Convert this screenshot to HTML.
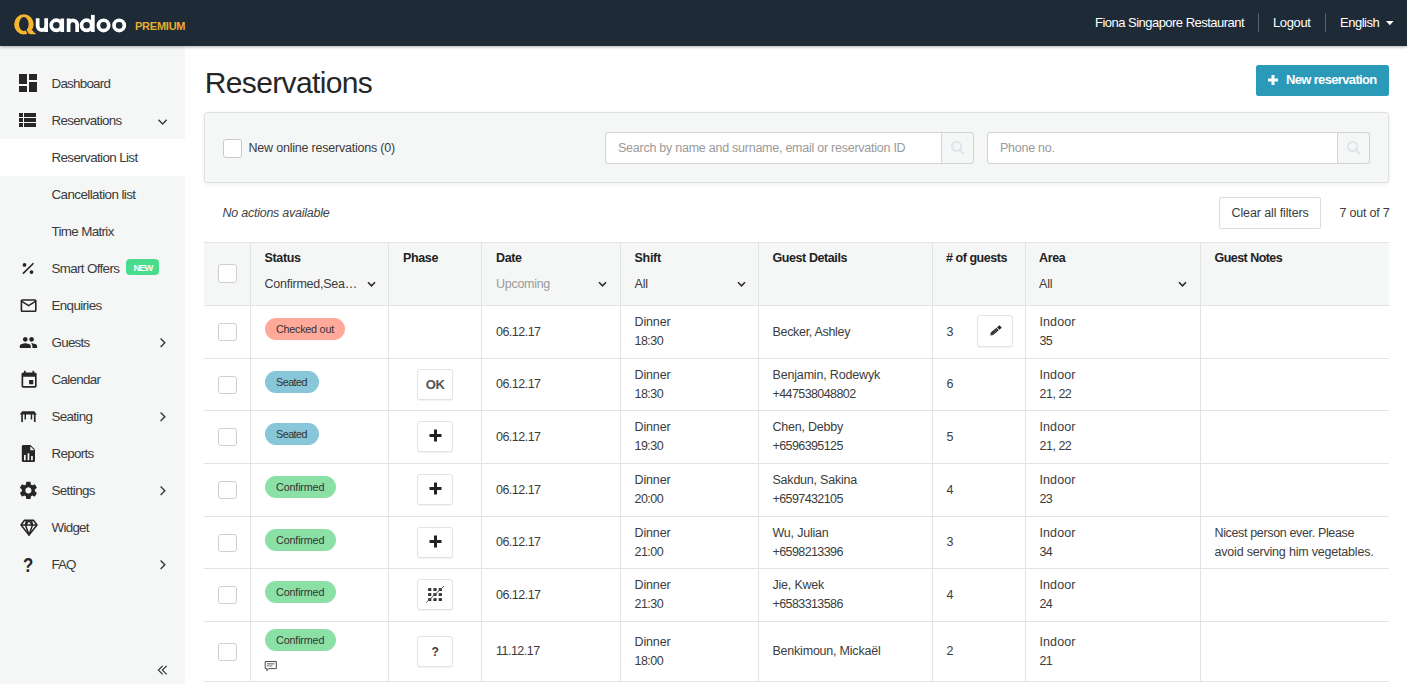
<!DOCTYPE html>
<html><head><meta charset="utf-8"><title>Reservations</title>
<style>
html,body{margin:0;padding:0;}
body{width:1407px;height:684px;overflow:hidden;position:relative;background:#fff;font-family:"Liberation Sans",sans-serif;}
.t{position:absolute;white-space:nowrap;}
.b{position:absolute;display:block;}
</style></head><body>
<div class="b" style="left:0px;top:0px;width:1407px;height:46px;background:#1e2a35;box-shadow:0 1px 3px rgba(0,0,0,.32);z-index:5"></div>
<svg class="b" style="left:0px;top:0px;z-index:6" width="130" height="46" viewBox="0 0 130 46"><path fill="#f8b52f" fill-rule="evenodd" d="M14.1 24.35A9.8 10.05 0 1 0 33.7 24.35A9.8 10.05 0 1 0 14.1 24.35ZM19 24.05A4.85 6.95 0 1 0 28.7 24.05A4.85 6.95 0 1 0 19 24.05Z"/><path fill="#f8b52f" d="M27 29.2L32.6 30.4Q34.3 32.9 36.5 34Q32.4 34.7 28.8 33.8Z"/><path d="M25.7 29.1L28.3 34.6" stroke="#1e2a35" stroke-width="1.1"/><g fill="none" stroke="#fff" stroke-width="3.7"><path d="M37.65 18.3V25.9A4.25 4.25 0 0 0 46.15 25.9V18.3M46.15 25.5V31.9"/><circle cx="56.3" cy="25.3" r="5.1"/><path d="M62.25 18.5V32"/><path d="M68.6 32V24.6A4.275 4.275 0 0 1 77.15 24.6V32M68.6 25V18.6"/><circle cx="86.6" cy="25.3" r="5.1"/><path d="M92.85 14.9V32"/><circle cx="103.55" cy="25.4" r="5.15"/><circle cx="119.15" cy="25.4" r="5.15"/></g></svg>
<div class="t" style="left:135.00px;top:16.13px;font-size:11px;line-height:20px;color:#e8ad2f;font-weight:bold;letter-spacing:-0.235px;z-index:6">PREMIUM</div>
<div class="t" style="left:1095.00px;top:12.65px;font-size:13px;line-height:20px;color:#fff;letter-spacing:-0.523px;z-index:6">Fiona Singapore Restaurant</div>
<div class="b" style="left:1258px;top:13px;width:1px;height:19px;background:#56606a;z-index:6"></div>
<div class="t" style="left:1273.00px;top:12.65px;font-size:13px;line-height:20px;color:#fff;letter-spacing:-0.377px;z-index:6">Logout</div>
<div class="b" style="left:1325px;top:13px;width:1px;height:19px;background:#56606a;z-index:6"></div>
<div class="t" style="left:1340.00px;top:12.65px;font-size:13px;line-height:20px;color:#fff;letter-spacing:-0.491px;z-index:6">English</div>
<svg class="b" style="left:1386px;top:21.3px;z-index:6" width="8" height="5" viewBox="0 0 8 5"><path d="M0 0H7.6L3.8 4.3Z" fill="#fff"/></svg>
<div class="b" style="left:0px;top:46px;width:185px;height:638px;background:#f5f6f6"></div>
<div class="b" style="left:0px;top:139px;width:185px;height:37px;background:#fff"></div>
<div class="t" style="left:51.50px;top:73.65px;font-size:13.4px;line-height:20px;color:#3a3a3a;letter-spacing:-0.761px;">Dashboard</div>
<div class="t" style="left:51.50px;top:110.65px;font-size:13.4px;line-height:20px;color:#3a3a3a;letter-spacing:-0.681px;">Reservations</div>
<div class="t" style="left:51.50px;top:147.65px;font-size:13.4px;line-height:20px;color:#3a3a3a;letter-spacing:-0.627px;">Reservation List</div>
<div class="t" style="left:51.50px;top:184.65px;font-size:13.4px;line-height:20px;color:#3a3a3a;letter-spacing:-0.577px;">Cancellation list</div>
<div class="t" style="left:51.50px;top:221.65px;font-size:13.4px;line-height:20px;color:#3a3a3a;letter-spacing:-0.660px;">Time Matrix</div>
<div class="t" style="left:51.50px;top:258.65px;font-size:13.4px;line-height:20px;color:#3a3a3a;letter-spacing:-0.659px;">Smart Offers</div>
<div class="t" style="left:51.50px;top:295.65px;font-size:13.4px;line-height:20px;color:#3a3a3a;letter-spacing:-0.649px;">Enquiries</div>
<div class="t" style="left:51.50px;top:332.65px;font-size:13.4px;line-height:20px;color:#3a3a3a;letter-spacing:-0.739px;">Guests</div>
<div class="t" style="left:51.50px;top:369.65px;font-size:13.4px;line-height:20px;color:#3a3a3a;letter-spacing:-0.710px;">Calendar</div>
<div class="t" style="left:51.50px;top:406.65px;font-size:13.4px;line-height:20px;color:#3a3a3a;letter-spacing:-0.678px;">Seating</div>
<div class="t" style="left:51.50px;top:443.65px;font-size:13.4px;line-height:20px;color:#3a3a3a;letter-spacing:-0.700px;">Reports</div>
<div class="t" style="left:51.50px;top:480.65px;font-size:13.4px;line-height:20px;color:#3a3a3a;letter-spacing:-0.632px;">Settings</div>
<div class="t" style="left:51.50px;top:517.65px;font-size:13.4px;line-height:20px;color:#3a3a3a;letter-spacing:-0.726px;">Widget</div>
<div class="t" style="left:51.50px;top:554.65px;font-size:13.4px;line-height:20px;color:#3a3a3a;letter-spacing:-0.934px;">FAQ</div>
<div class="b" style="left:126px;top:259px;width:32.5px;height:16px;background:#48dc8c;border-radius:4px"></div>
<div class="t" style="left:133.60px;top:257.71px;font-size:9.3px;line-height:20px;color:#fff;font-weight:bold;letter-spacing:-1.032px;">NEW</div>
<svg class="b" style="left:16.4px;top:71.4px;" width="24" height="24" viewBox="0 0 24 24"><path fill="#262626" d="M3 13h8V3H3v10zm0 8h8v-6H3v6zm10 0h8V11h-8v10zm0-18v6h8V3h-8z"/></svg>
<svg class="b" style="left:15.4px;top:107.9px;" width="24" height="24" viewBox="0 0 24 24"><path fill="#262626" d="M4 14h4v-4H4v4zm0 5h4v-4H4v4zM4 9h4V5H4v4zm5 5h12v-4H9v4zm0 5h12v-4H9v4zM9 5v4h12V5H9z"/></svg>
<svg class="b" style="left:20px;top:260px;" width="16" height="16" viewBox="0 0 16 16"><circle cx="4.5" cy="4.9" r="1.9" fill="#262626"/><circle cx="11.5" cy="12.1" r="1.9" fill="#262626"/><path d="M3 13.6L13.5 3.3" stroke="#262626" stroke-width="1.6"/></svg>
<svg class="b" style="left:18.5px;top:295.7px;" width="19.2" height="19.2" viewBox="0 0 24 24"><path fill="#262626" d="M20 4H4c-1.1 0-1.99.9-1.99 2L2 18c0 1.1.9 2 2 2h16c1.1 0 2-.9 2-2V6c0-1.1-.9-2-2-2zm0 14H4V8l8 5 8-5v10zm-8-7L4 6h16l-8 5z"/></svg>
<svg class="b" style="left:18.7px;top:333.3px;" width="18.9" height="18.9" viewBox="0 0 24 24"><path fill="#262626" d="M16 11c1.66 0 2.99-1.34 2.99-3S17.66 5 16 5c-1.66 0-3 1.34-3 3s1.34 3 3 3zm-8 0c1.66 0 2.99-1.34 2.99-3S9.66 5 8 5C6.340 5 5 6.34 5 8s1.34 3 3 3zm0 2c-2.33 0-7 1.17-7 3.5V19h14v-2.5c0-2.33-4.67-3.5-7-3.5zm8 0c-.29 0-.62.02-.97.05 1.16.84 1.970 1.97 1.97 3.45V19h6v-2.5c0-2.33-4.67-3.5-7-3.5z"/></svg>
<svg class="b" style="left:18.5px;top:370.2px;" width="20.2" height="20.2" viewBox="0 0 24 24"><path fill="#262626" d="M17 12h-5v5h5v-5zM16 1v2H8V1H6v2H5c-1.11 0-1.99.9-1.99 2L3 19c0 1.1.89 2 2 2h14c1.1 0 2-.9 2-2V5c0-1.1-.9-2-2-2h-1V1h-2zm3 18H5V8h14v11z"/></svg>
<svg class="b" style="left:19px;top:410px;" width="19" height="13" viewBox="0 0 19 13"><path fill="#262626" d="M3.2 1.2H15.3L17.8 4.6H0.7Z"/><rect x="2.2" y="4" width="1.7" height="8" fill="#262626"/><rect x="5.5" y="4" width="1.5" height="5.5" fill="#262626"/><rect x="11.7" y="4" width="1.5" height="5.5" fill="#262626"/><rect x="14.9" y="4" width="1.7" height="8" fill="#262626"/></svg>
<svg class="b" style="left:21px;top:444px;" width="15" height="19" viewBox="0 0 15 19"><path fill="#262626" d="M2.2 1H9.5L14 5.6V16.5Q14 18 12.5 18H2.2Q0.8 18 0.8 16.5V2.5Q0.8 1 2.2 1Z"/><path fill="#f5f6f6" d="M9.3 2.2V6.2H13.3Z"/><rect x="3" y="11" width="1.7" height="5.3" fill="#f5f6f6"/><rect x="6.6" y="9.3" width="1.7" height="7" fill="#f5f6f6"/><rect x="10.1" y="12" width="1.7" height="4.3" fill="#f5f6f6"/></svg>
<svg class="b" style="left:17.75px;top:480.3px;" width="20.8" height="20.8" viewBox="0 0 24 24"><path fill="#262626" d="M19.43 12.98c.04-.32.07-.64.07-.98s-.03-.66-.07-.98l2.11-1.65c.19-.15.24-.42.12-.64l-2-3.46c-.12-.22-.39-.3-.61-.22l-2.49 1c-.52-.4-1.08-.73-1.69-.98l-.38-2.65C14.46 2.18 14.25 2 14 2h-4c-.25 0-.46.18-.49.42l-.38 2.650c-.61.25-1.17.59-1.69.98l-2.49-1c-.23-.09-.49 0-.61.22l-2 3.46c-.13.22-.07.49.12.64l2.11 1.65c-.04.32-.07.65-.07.98s.03.66.07.98l-2.11 1.65c-.19.15-.24.42-.12.64l2 3.46c.12.22.39.3.61.22l2.49-1c.52.4 1.08.73 1.69.98l.38 2.65c.03.24.24.42.49.42h4c.25 0 .46-.18.49-.42l.38-2.65c.61-.25 1.17-.59 1.69-.98l2.49 1c.23.09.49 0 .61-.22l2-3.46c.12-.22.07-.49-.12-.64l-2.11-1.65zM12 15.5c-1.93 0-3.5-1.57-3.5-3.5s1.57-3.5 3.5-3.5 3.5 1.57 3.5 3.5-1.57 3.5-3.5 3.5z"/></svg>
<svg class="b" style="left:19.5px;top:519px;" width="18" height="18" viewBox="0 0 18 18"><g fill="none" stroke="#262626" stroke-width="1.5" stroke-linejoin="round"><path d="M4.5 1.2H13.5L17 6L9 16L1 6Z"/><path d="M1 6H17M6.5 1.2L5.5 6L9 16L12.5 6L11.5 1.2M5.5 6L9 1.5L12.5 6"/></g></svg>
<div class="t" style="left:23.20px;top:552.04px;font-size:21px;line-height:26px;color:#262626;font-weight:bold;transform:scaleX(0.8);transform-origin:0 50%">?</div>
<svg class="b" style="left:157px;top:117px;" width="11" height="9" viewBox="0 0 11 9"><path d="M1.5 2.8L5.6 7L9.7 2.8" fill="none" stroke="#3a3a3a" stroke-width="1.45"/></svg>
<svg class="b" style="left:158px;top:337.0px;" width="9" height="11" viewBox="0 0 9 11"><path d="M2.6 1.6L6.8 5.8L2.6 10" fill="none" stroke="#3a3a3a" stroke-width="1.45"/></svg>
<svg class="b" style="left:158px;top:411.0px;" width="9" height="11" viewBox="0 0 9 11"><path d="M2.6 1.6L6.8 5.8L2.6 10" fill="none" stroke="#3a3a3a" stroke-width="1.45"/></svg>
<svg class="b" style="left:158px;top:485.0px;" width="9" height="11" viewBox="0 0 9 11"><path d="M2.6 1.6L6.8 5.8L2.6 10" fill="none" stroke="#3a3a3a" stroke-width="1.45"/></svg>
<svg class="b" style="left:158px;top:559.0px;" width="9" height="11" viewBox="0 0 9 11"><path d="M2.6 1.6L6.8 5.8L2.6 10" fill="none" stroke="#3a3a3a" stroke-width="1.45"/></svg>
<svg class="b" style="left:156px;top:664px;" width="12" height="12" viewBox="0 0 12 12"><path d="M6.7 1.9L2.4 6.1L6.7 10.4M10.7 1.9L6.4 6.1L10.7 10.4" fill="none" stroke="#3a3a3a" stroke-width="1.3"/></svg>
<div class="t" style="left:204.70px;top:62.84px;font-size:30px;line-height:40px;color:#262626;letter-spacing:-0.632px;">Reservations</div>
<div class="b" style="left:1256px;top:65px;width:133px;height:31px;background:#2b9ab9;border-radius:2.5px"></div>
<svg class="b" style="left:1267px;top:74.2px;" width="12" height="12" viewBox="0 0 12 12"><path d="M6 1V11M1 6H11" stroke="#fff" stroke-width="3"/></svg>
<div class="t" style="left:1286.00px;top:69.75px;font-size:13px;line-height:20px;color:#fff;font-weight:bold;letter-spacing:-0.656px;">New reservation</div>
<div class="b" style="left:204px;top:112px;width:1185px;height:71px;background:#f5f6f6;border:1px solid #dfe1e1;border-radius:3px;box-sizing:border-box;box-shadow:0 1px 5px rgba(0,0,0,.07)"></div>
<div class="b" style="left:223px;top:139px;width:19px;height:19px;background:#fff;border:1px solid #c9c9c9;border-radius:3px;box-sizing:border-box"></div>
<div class="t" style="left:248.50px;top:137.64px;font-size:12.5px;line-height:20px;color:#3c3c3c;letter-spacing:-0.209px;">New online reservations (0)</div>
<div class="b" style="left:605px;top:132px;width:369px;height:32px;background:#fff;border:1px solid #d3d3d3;border-radius:3px;box-sizing:border-box"></div>
<div class="b" style="left:941px;top:132px;width:33px;height:32px;background:#f5f6f6;border:1px solid #d3d3d3;border-radius:0 3px 3px 0;box-sizing:border-box"></div>
<div class="t" style="left:618.00px;top:137.64px;font-size:12.5px;line-height:20px;color:#9a9a9a;letter-spacing:-0.250px;">Search by name and surname, email or reservation ID</div>
<svg class="b" style="left:949px;top:139px;" width="17" height="17" viewBox="0 0 17 17"><circle cx="7.5" cy="7.5" r="4.6" fill="none" stroke="#dce5ec" stroke-width="1.8"/><path d="M10.8 10.8L14.2 14.2" stroke="#dce5ec" stroke-width="2.2" stroke-linecap="round"/></svg>
<div class="b" style="left:987px;top:132px;width:383px;height:32px;background:#fff;border:1px solid #d3d3d3;border-radius:3px;box-sizing:border-box"></div>
<div class="b" style="left:1337px;top:132px;width:33px;height:32px;background:#f5f6f6;border:1px solid #d3d3d3;border-radius:0 3px 3px 0;box-sizing:border-box"></div>
<div class="t" style="left:1000.00px;top:137.64px;font-size:12.5px;line-height:20px;color:#9a9a9a;letter-spacing:-0.253px;">Phone no.</div>
<svg class="b" style="left:1345px;top:139px;" width="17" height="17" viewBox="0 0 17 17"><circle cx="7.5" cy="7.5" r="4.6" fill="none" stroke="#dce5ec" stroke-width="1.8"/><path d="M10.8 10.8L14.2 14.2" stroke="#dce5ec" stroke-width="2.2" stroke-linecap="round"/></svg>
<div class="t" style="left:222.50px;top:202.94px;font-size:12.5px;line-height:20px;color:#444;font-style:italic;letter-spacing:-0.244px;">No actions available</div>
<div class="b" style="left:1219px;top:197px;width:102px;height:32px;background:#fff;border:1px solid #dcdcdc;border-radius:2px;box-sizing:border-box"></div>
<div class="t" style="left:1231.50px;top:202.94px;font-size:12.5px;line-height:20px;color:#3c3c3c;letter-spacing:-0.117px;">Clear all filters</div>
<div class="t" style="left:1339.50px;top:202.94px;font-size:12.5px;line-height:20px;color:#3c3c3c;letter-spacing:-0.212px;">7 out of 7</div>
<div class="b" style="left:204px;top:242px;width:1185px;height:64px;background:#f5f6f6;border-top:1px solid #e3e3e3;box-sizing:border-box"></div>
<div class="b" style="left:250px;top:242px;width:1px;height:440px;background:#e3e3e3"></div>
<div class="b" style="left:388px;top:242px;width:1px;height:440px;background:#e3e3e3"></div>
<div class="b" style="left:481px;top:242px;width:1px;height:440px;background:#e3e3e3"></div>
<div class="b" style="left:620px;top:242px;width:1px;height:440px;background:#e3e3e3"></div>
<div class="b" style="left:758px;top:242px;width:1px;height:440px;background:#e3e3e3"></div>
<div class="b" style="left:932px;top:242px;width:1px;height:440px;background:#e3e3e3"></div>
<div class="b" style="left:1025px;top:242px;width:1px;height:440px;background:#e3e3e3"></div>
<div class="b" style="left:1200px;top:242px;width:1px;height:440px;background:#e3e3e3"></div>
<div class="b" style="left:204px;top:305px;width:1185px;height:1px;background:#e3e3e3"></div>
<div class="b" style="left:204px;top:358px;width:1185px;height:1px;background:#e3e3e3"></div>
<div class="b" style="left:204px;top:410px;width:1185px;height:1px;background:#e3e3e3"></div>
<div class="b" style="left:204px;top:463px;width:1185px;height:1px;background:#e3e3e3"></div>
<div class="b" style="left:204px;top:516px;width:1185px;height:1px;background:#e3e3e3"></div>
<div class="b" style="left:204px;top:568px;width:1185px;height:1px;background:#e3e3e3"></div>
<div class="b" style="left:204px;top:621px;width:1185px;height:1px;background:#e3e3e3"></div>
<div class="b" style="left:204px;top:681px;width:1185px;height:1px;background:#e3e3e3"></div>
<div class="b" style="left:218px;top:264px;width:19px;height:19px;background:#fff;border:1px solid #cfcfcf;border-radius:3px;box-sizing:border-box"></div>
<div class="t" style="left:264.50px;top:247.94px;font-size:12.5px;line-height:20px;color:#222;font-weight:bold;letter-spacing:-0.350px;">Status</div>
<div class="t" style="left:403.00px;top:247.94px;font-size:12.5px;line-height:20px;color:#222;font-weight:bold;letter-spacing:-0.368px;">Phase</div>
<div class="t" style="left:496.00px;top:247.94px;font-size:12.5px;line-height:20px;color:#222;font-weight:bold;letter-spacing:-0.339px;">Date</div>
<div class="t" style="left:634.50px;top:247.94px;font-size:12.5px;line-height:20px;color:#222;font-weight:bold;letter-spacing:-0.278px;">Shift</div>
<div class="t" style="left:772.50px;top:247.94px;font-size:12.5px;line-height:20px;color:#222;font-weight:bold;letter-spacing:-0.415px;">Guest Details</div>
<div class="t" style="left:946.00px;top:247.94px;font-size:12.5px;line-height:20px;color:#222;font-weight:bold;letter-spacing:-0.453px;"># of guests</div>
<div class="t" style="left:1039.00px;top:247.94px;font-size:12.5px;line-height:20px;color:#222;font-weight:bold;letter-spacing:-0.347px;">Area</div>
<div class="t" style="left:1214.50px;top:247.94px;font-size:12.5px;line-height:20px;color:#222;font-weight:bold;letter-spacing:-0.539px;">Guest Notes</div>
<div class="t" style="left:264.50px;top:273.64px;font-size:12.5px;line-height:20px;color:#3c3c3c;letter-spacing:-0.241px;">Confirmed,Sea…</div>
<svg class="b" style="left:367px;top:280.5px;" width="9" height="7" viewBox="0 0 9 7"><path d="M1 1.3L4.5 4.8L8 1.3" fill="none" stroke="#2a2a2a" stroke-width="1.6"/></svg>
<div class="t" style="left:496.00px;top:274.14px;font-size:12.5px;line-height:20px;color:#9a9a9a;letter-spacing:-0.281px;">Upcoming</div>
<svg class="b" style="left:597.5px;top:280.5px;" width="9" height="7" viewBox="0 0 9 7"><path d="M1 1.3L4.5 4.8L8 1.3" fill="none" stroke="#2a2a2a" stroke-width="1.6"/></svg>
<div class="t" style="left:634.50px;top:274.14px;font-size:12.5px;line-height:20px;color:#3c3c3c;letter-spacing:-0.185px;">All</div>
<svg class="b" style="left:736.5px;top:280.5px;" width="9" height="7" viewBox="0 0 9 7"><path d="M1 1.3L4.5 4.8L8 1.3" fill="none" stroke="#2a2a2a" stroke-width="1.6"/></svg>
<div class="t" style="left:1039.00px;top:274.14px;font-size:12.5px;line-height:20px;color:#3c3c3c;letter-spacing:-0.185px;">All</div>
<svg class="b" style="left:1178px;top:280.5px;" width="9" height="7" viewBox="0 0 9 7"><path d="M1 1.3L4.5 4.8L8 1.3" fill="none" stroke="#2a2a2a" stroke-width="1.6"/></svg>
<div class="b" style="left:218px;top:323px;width:19px;height:18px;background:#fff;border:1px solid #cfcfcf;border-radius:3px;box-sizing:border-box"></div>
<div class="b" style="left:265px;top:318px;width:80px;height:22px;background:#ffa99b;border-radius:11px"></div>
<div class="t" style="left:276.00px;top:318.96px;font-size:10.8px;line-height:20px;color:#333;letter-spacing:-0.249px;">Checked out</div>
<div class="t" style="left:496.00px;top:321.58px;font-size:12.5px;line-height:20px;color:#3c3c3c;letter-spacing:-0.517px;">06.12.17</div>
<div class="t" style="left:634.50px;top:311.98px;font-size:12.5px;line-height:20px;color:#3c3c3c;letter-spacing:-0.137px;">Dinner</div>
<div class="t" style="left:634.50px;top:330.98px;font-size:12.5px;line-height:20px;color:#3c3c3c;letter-spacing:-0.532px;">18:30</div>
<div class="t" style="left:772.50px;top:321.68px;font-size:12.5px;line-height:20px;color:#3c3c3c;letter-spacing:-0.314px;">Becker, Ashley</div>
<div class="t" style="left:946.50px;top:321.58px;font-size:12.5px;line-height:20px;color:#3c3c3c;">3</div>
<div class="b" style="left:977px;top:315px;width:36px;height:32px;background:#fff;border:1px solid #dfe4e7;border-radius:3px;box-sizing:border-box;box-shadow:0 1px 1px rgba(0,0,0,.05)"></div>
<svg class="b" style="left:980px;top:315px;" width="30" height="30" viewBox="0 0 30 30"><g transform="translate(9.6 20.7) rotate(-40)"><path d="M0 0L3.2 -1.7V1.7Z" fill="#222"/><rect x="3.2" y="-1.7" width="7.3" height="3.4" fill="#2a2a2a"/><rect x="11.2" y="-1.7" width="3.2" height="3.4" fill="#222"/><path d="M4.5 -0.55H10M4.5 0.6H10" stroke="#777" stroke-width="0.45"/></g><circle cx="10.5" cy="20" r="0.8" fill="#fff"/></svg>
<div class="t" style="left:1039.50px;top:311.98px;font-size:12.5px;line-height:20px;color:#3c3c3c;letter-spacing:0.093px;">Indoor</div>
<div class="t" style="left:1039.50px;top:330.98px;font-size:12.5px;line-height:20px;color:#3c3c3c;letter-spacing:-0.591px;">35</div>
<div class="b" style="left:218px;top:376px;width:19px;height:18px;background:#fff;border:1px solid #cfcfcf;border-radius:3px;box-sizing:border-box"></div>
<div class="b" style="left:265px;top:371px;width:54px;height:22px;background:#88c6d9;border-radius:11px"></div>
<div class="t" style="left:276.00px;top:371.63px;font-size:10.8px;line-height:20px;color:#333;letter-spacing:-0.538px;">Seated</div>
<div class="b" style="left:417px;top:369px;width:36px;height:31px;background:#fff;border:1px solid #dfe4e7;border-radius:3px;box-sizing:border-box;box-shadow:0 1px 1px rgba(0,0,0,.05)"></div>
<div class="t" style="left:425.80px;top:374.65px;font-size:13px;line-height:20px;color:#555;font-weight:bold;letter-spacing:-0.450px;">OK</div>
<div class="t" style="left:496.00px;top:374.25px;font-size:12.5px;line-height:20px;color:#3c3c3c;letter-spacing:-0.517px;">06.12.17</div>
<div class="t" style="left:634.50px;top:364.65px;font-size:12.5px;line-height:20px;color:#3c3c3c;letter-spacing:-0.137px;">Dinner</div>
<div class="t" style="left:634.50px;top:383.65px;font-size:12.5px;line-height:20px;color:#3c3c3c;letter-spacing:-0.532px;">18:30</div>
<div class="t" style="left:772.50px;top:364.65px;font-size:12.5px;line-height:20px;color:#3c3c3c;letter-spacing:-0.169px;">Benjamin, Rodewyk</div>
<div class="t" style="left:772.50px;top:383.65px;font-size:12.5px;line-height:20px;color:#3c3c3c;letter-spacing:-0.593px;">+447538048802</div>
<div class="t" style="left:946.50px;top:374.25px;font-size:12.5px;line-height:20px;color:#3c3c3c;">6</div>
<div class="t" style="left:1039.50px;top:364.65px;font-size:12.5px;line-height:20px;color:#3c3c3c;letter-spacing:0.093px;">Indoor</div>
<div class="t" style="left:1039.50px;top:383.65px;font-size:12.5px;line-height:20px;color:#3c3c3c;letter-spacing:-0.492px;">21, 22</div>
<div class="b" style="left:218px;top:428px;width:19px;height:18px;background:#fff;border:1px solid #cfcfcf;border-radius:3px;box-sizing:border-box"></div>
<div class="b" style="left:265px;top:423px;width:54px;height:22px;background:#88c6d9;border-radius:11px"></div>
<div class="t" style="left:276.00px;top:424.30px;font-size:10.8px;line-height:20px;color:#333;letter-spacing:-0.538px;">Seated</div>
<div class="b" style="left:417px;top:421px;width:36px;height:31px;background:#fff;border:1px solid #dfe4e7;border-radius:3px;box-sizing:border-box;box-shadow:0 1px 1px rgba(0,0,0,.05)"></div>
<svg class="b" style="left:428.5px;top:429px;" width="13" height="13" viewBox="0 0 13 13"><path d="M6.5 0.5V12.5M0.5 6.5H12.5" stroke="#222" stroke-width="3"/></svg>
<div class="t" style="left:496.00px;top:426.92px;font-size:12.5px;line-height:20px;color:#3c3c3c;letter-spacing:-0.517px;">06.12.17</div>
<div class="t" style="left:634.50px;top:417.32px;font-size:12.5px;line-height:20px;color:#3c3c3c;letter-spacing:-0.137px;">Dinner</div>
<div class="t" style="left:634.50px;top:436.32px;font-size:12.5px;line-height:20px;color:#3c3c3c;letter-spacing:-0.532px;">19:30</div>
<div class="t" style="left:772.50px;top:417.32px;font-size:12.5px;line-height:20px;color:#3c3c3c;letter-spacing:-0.232px;">Chen, Debby</div>
<div class="t" style="left:772.50px;top:436.32px;font-size:12.5px;line-height:20px;color:#3c3c3c;letter-spacing:-0.594px;">+6596395125</div>
<div class="t" style="left:946.50px;top:426.92px;font-size:12.5px;line-height:20px;color:#3c3c3c;">5</div>
<div class="t" style="left:1039.50px;top:417.32px;font-size:12.5px;line-height:20px;color:#3c3c3c;letter-spacing:0.093px;">Indoor</div>
<div class="t" style="left:1039.50px;top:436.32px;font-size:12.5px;line-height:20px;color:#3c3c3c;letter-spacing:-0.492px;">21, 22</div>
<div class="b" style="left:218px;top:481px;width:19px;height:18px;background:#fff;border:1px solid #cfcfcf;border-radius:3px;box-sizing:border-box"></div>
<div class="b" style="left:265px;top:476px;width:71px;height:22px;background:#8be0a5;border-radius:11px"></div>
<div class="t" style="left:276.00px;top:476.97px;font-size:10.8px;line-height:20px;color:#333;letter-spacing:-0.169px;">Confirmed</div>
<div class="b" style="left:417px;top:474px;width:36px;height:31px;background:#fff;border:1px solid #dfe4e7;border-radius:3px;box-sizing:border-box;box-shadow:0 1px 1px rgba(0,0,0,.05)"></div>
<svg class="b" style="left:428.5px;top:482px;" width="13" height="13" viewBox="0 0 13 13"><path d="M6.5 0.5V12.5M0.5 6.5H12.5" stroke="#222" stroke-width="3"/></svg>
<div class="t" style="left:496.00px;top:479.59px;font-size:12.5px;line-height:20px;color:#3c3c3c;letter-spacing:-0.517px;">06.12.17</div>
<div class="t" style="left:634.50px;top:469.99px;font-size:12.5px;line-height:20px;color:#3c3c3c;letter-spacing:-0.137px;">Dinner</div>
<div class="t" style="left:634.50px;top:488.99px;font-size:12.5px;line-height:20px;color:#3c3c3c;letter-spacing:-0.532px;">20:00</div>
<div class="t" style="left:772.50px;top:469.99px;font-size:12.5px;line-height:20px;color:#3c3c3c;letter-spacing:-0.219px;">Sakdun, Sakina</div>
<div class="t" style="left:772.50px;top:488.99px;font-size:12.5px;line-height:20px;color:#3c3c3c;letter-spacing:-0.594px;">+6597432105</div>
<div class="t" style="left:946.50px;top:479.59px;font-size:12.5px;line-height:20px;color:#3c3c3c;">4</div>
<div class="t" style="left:1039.50px;top:469.99px;font-size:12.5px;line-height:20px;color:#3c3c3c;letter-spacing:0.093px;">Indoor</div>
<div class="t" style="left:1039.50px;top:488.99px;font-size:12.5px;line-height:20px;color:#3c3c3c;letter-spacing:-0.591px;">23</div>
<div class="b" style="left:218px;top:534px;width:19px;height:18px;background:#fff;border:1px solid #cfcfcf;border-radius:3px;box-sizing:border-box"></div>
<div class="b" style="left:265px;top:529px;width:71px;height:22px;background:#8be0a5;border-radius:11px"></div>
<div class="t" style="left:276.00px;top:529.64px;font-size:10.8px;line-height:20px;color:#333;letter-spacing:-0.169px;">Confirmed</div>
<div class="b" style="left:417px;top:527px;width:36px;height:31px;background:#fff;border:1px solid #dfe4e7;border-radius:3px;box-sizing:border-box;box-shadow:0 1px 1px rgba(0,0,0,.05)"></div>
<svg class="b" style="left:428.5px;top:535px;" width="13" height="13" viewBox="0 0 13 13"><path d="M6.5 0.5V12.5M0.5 6.5H12.5" stroke="#222" stroke-width="3"/></svg>
<div class="t" style="left:496.00px;top:532.26px;font-size:12.5px;line-height:20px;color:#3c3c3c;letter-spacing:-0.517px;">06.12.17</div>
<div class="t" style="left:634.50px;top:522.66px;font-size:12.5px;line-height:20px;color:#3c3c3c;letter-spacing:-0.137px;">Dinner</div>
<div class="t" style="left:634.50px;top:541.66px;font-size:12.5px;line-height:20px;color:#3c3c3c;letter-spacing:-0.532px;">21:00</div>
<div class="t" style="left:772.50px;top:522.66px;font-size:12.5px;line-height:20px;color:#3c3c3c;letter-spacing:-0.203px;">Wu, Julian</div>
<div class="t" style="left:772.50px;top:541.66px;font-size:12.5px;line-height:20px;color:#3c3c3c;letter-spacing:-0.594px;">+6598213396</div>
<div class="t" style="left:946.50px;top:532.26px;font-size:12.5px;line-height:20px;color:#3c3c3c;">3</div>
<div class="t" style="left:1039.50px;top:522.66px;font-size:12.5px;line-height:20px;color:#3c3c3c;letter-spacing:0.093px;">Indoor</div>
<div class="t" style="left:1039.50px;top:541.66px;font-size:12.5px;line-height:20px;color:#3c3c3c;letter-spacing:-0.591px;">34</div>
<div class="t" style="left:1214.50px;top:522.66px;font-size:12.5px;line-height:20px;color:#3c3c3c;letter-spacing:-0.353px;">Nicest person ever. Please</div>
<div class="t" style="left:1214.50px;top:541.66px;font-size:12.5px;line-height:20px;color:#3c3c3c;letter-spacing:-0.196px;">avoid serving him vegetables.</div>
<div class="b" style="left:218px;top:586px;width:19px;height:18px;background:#fff;border:1px solid #cfcfcf;border-radius:3px;box-sizing:border-box"></div>
<div class="b" style="left:265px;top:581px;width:71px;height:22px;background:#8be0a5;border-radius:11px"></div>
<div class="t" style="left:276.00px;top:582.31px;font-size:10.8px;line-height:20px;color:#333;letter-spacing:-0.169px;">Confirmed</div>
<div class="b" style="left:417px;top:579px;width:36px;height:31px;background:#fff;border:1px solid #dfe4e7;border-radius:3px;box-sizing:border-box;box-shadow:0 1px 1px rgba(0,0,0,.05)"></div>
<svg class="b" style="left:420px;top:579px;" width="30" height="30" viewBox="0 0 30 30"><rect x="8.10" y="9.10" width="3.2" height="2.9" fill="#333"/><rect x="8.10" y="14.10" width="3.2" height="2.9" fill="#333"/><rect x="8.10" y="19.10" width="3.2" height="2.9" fill="#333"/><rect x="13.40" y="9.10" width="3.2" height="2.9" fill="#333"/><rect x="13.40" y="14.10" width="3.2" height="2.9" fill="#333"/><rect x="13.40" y="19.10" width="3.2" height="2.9" fill="#333"/><rect x="18.70" y="9.10" width="3.2" height="2.9" fill="#333"/><rect x="18.70" y="14.10" width="3.2" height="2.9" fill="#333"/><rect x="18.70" y="19.10" width="3.2" height="2.9" fill="#333"/><path d="M6.2 23.5L24 7.2" stroke="#555" stroke-width="1"/></svg>
<div class="t" style="left:496.00px;top:584.93px;font-size:12.5px;line-height:20px;color:#3c3c3c;letter-spacing:-0.517px;">06.12.17</div>
<div class="t" style="left:634.50px;top:575.33px;font-size:12.5px;line-height:20px;color:#3c3c3c;letter-spacing:-0.137px;">Dinner</div>
<div class="t" style="left:634.50px;top:594.33px;font-size:12.5px;line-height:20px;color:#3c3c3c;letter-spacing:-0.532px;">21:30</div>
<div class="t" style="left:772.50px;top:575.33px;font-size:12.5px;line-height:20px;color:#3c3c3c;letter-spacing:-0.208px;">Jie, Kwek</div>
<div class="t" style="left:772.50px;top:594.33px;font-size:12.5px;line-height:20px;color:#3c3c3c;letter-spacing:-0.594px;">+6583313586</div>
<div class="t" style="left:946.50px;top:584.93px;font-size:12.5px;line-height:20px;color:#3c3c3c;">4</div>
<div class="t" style="left:1039.50px;top:575.33px;font-size:12.5px;line-height:20px;color:#3c3c3c;letter-spacing:0.093px;">Indoor</div>
<div class="t" style="left:1039.50px;top:594.33px;font-size:12.5px;line-height:20px;color:#3c3c3c;letter-spacing:-0.591px;">24</div>
<div class="b" style="left:218px;top:643px;width:19px;height:18px;background:#fff;border:1px solid #cfcfcf;border-radius:3px;box-sizing:border-box"></div>
<div class="b" style="left:265px;top:629px;width:71px;height:22px;background:#8be0a5;border-radius:11px"></div>
<div class="t" style="left:276.00px;top:630.12px;font-size:10.8px;line-height:20px;color:#333;letter-spacing:-0.169px;">Confirmed</div>
<svg class="b" style="left:264px;top:660px;" width="14" height="13" viewBox="0 0 14 13"><path d="M1.2 1.5H12.3V8.6H4.6L2.9 10.8V8.6H1.2Z" fill="#fff" stroke="#4a4a58" stroke-width="1" stroke-linejoin="round"/><rect x="2.8" y="3.1" width="7.8" height="1.4" fill="#8a8a8a"/><rect x="2.8" y="5.2" width="5.6" height="1.3" fill="#9a9a9a"/></svg>
<div class="b" style="left:417px;top:636px;width:36px;height:31px;background:#fff;border:1px solid #dfe4e7;border-radius:3px;box-sizing:border-box;box-shadow:0 1px 1px rgba(0,0,0,.05)"></div>
<div class="t" style="left:431.60px;top:642.14px;font-size:12px;line-height:20px;color:#3a3a3a;font-weight:bold;">?</div>
<div class="t" style="left:496.00px;top:641.24px;font-size:12.5px;line-height:20px;color:#3c3c3c;letter-spacing:-0.507px;">11.12.17</div>
<div class="t" style="left:634.50px;top:631.64px;font-size:12.5px;line-height:20px;color:#3c3c3c;letter-spacing:-0.137px;">Dinner</div>
<div class="t" style="left:634.50px;top:650.64px;font-size:12.5px;line-height:20px;color:#3c3c3c;letter-spacing:-0.532px;">18:00</div>
<div class="t" style="left:772.50px;top:641.34px;font-size:12.5px;line-height:20px;color:#3c3c3c;letter-spacing:-0.217px;">Benkimoun, Mickaël</div>
<div class="t" style="left:946.50px;top:641.24px;font-size:12.5px;line-height:20px;color:#3c3c3c;">2</div>
<div class="t" style="left:1039.50px;top:631.64px;font-size:12.5px;line-height:20px;color:#3c3c3c;letter-spacing:0.093px;">Indoor</div>
<div class="t" style="left:1039.50px;top:650.64px;font-size:12.5px;line-height:20px;color:#3c3c3c;letter-spacing:-0.591px;">21</div>
</body></html>
